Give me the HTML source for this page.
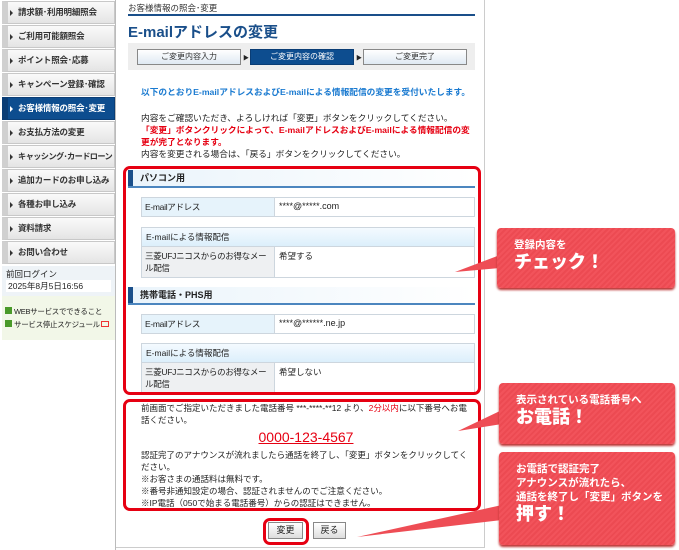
<!DOCTYPE html>
<html><head><meta charset="utf-8"><style>
*{margin:0;padding:0;box-sizing:border-box}
body{width:679px;height:550px;overflow:hidden;background:#fff;font-family:"Liberation Sans","Noto Sans CJK JP",sans-serif;font-size:9px;color:#222;position:relative}
.a{position:absolute}
.nav{left:0;top:0;width:116px;border-right:1px solid #bbb;height:550px}
.it{position:absolute;left:2px;width:113px;height:23px;background:linear-gradient(#fafafa,#e4e4e4);border:1px solid #c8c8c8;border-left:6px solid #d0d0d0;font-size:8.5px;font-weight:bold;color:#333;line-height:21px;padding-left:10px;white-space:nowrap;letter-spacing:-0.2px;overflow:hidden}
.it:before{content:"";position:absolute;left:2px;top:8px;border-left:3px solid #333;border-top:3px solid transparent;border-bottom:3px solid transparent}
.it.s{background:#0d4d8f;border-color:#0a3d75;color:#fff}
.it.s:before{border-left-color:#fff}
.tb{position:absolute;left:141px;width:334px;border:1px solid #cdd6de;font-size:8.5px}
.tb .r{display:flex;border-top:1px solid #cdd6de}
.tb .r:first-child{border-top:0}
.tb .l{width:133px;background:#e6f3fb;padding:3px 3px;border-right:1px solid #cdd6de;letter-spacing:-0.3px}
.tb .v{flex:1;background:#fff;padding:3px 4px}
.tb .h{background:linear-gradient(#f4faff,#dceffb);padding:3px 4px;width:100%}
.sh{position:absolute;left:128px;width:347px;height:18px;background:linear-gradient(90deg,#eaf4fb,#fff);border-bottom:2px solid #4c86bf;font-weight:bold;font-size:9px;line-height:17px;padding-left:12px}
.sh:before{content:"";position:absolute;left:0;top:0;width:5px;height:16px;background:#1a4f8a}
.rb{position:absolute;border:3px solid #e60012;border-radius:7px}
.co{position:absolute;background:repeating-linear-gradient(135deg,#f2535b 0 2px,#ec4a52 2px 4px);border-radius:4px;color:#fff;font-weight:bold;box-shadow:0 2px 2px #b33;font-size:10.5px;line-height:14px;padding:10px 14px}
.co b{font-size:18px;display:block;line-height:21px}
.stp{position:absolute;top:49px;height:16px;width:104px;border:1px solid #888;background:linear-gradient(#fff,#dfe9f3);font-size:8px;text-align:center;line-height:14px;color:#333}
</style></head><body>
<div class="a nav">
<div class="it" style="top:1px">請求額･利用明細照会</div>
<div class="it" style="top:25px">ご利用可能額照会</div>
<div class="it" style="top:49px">ポイント照会･応募</div>
<div class="it" style="top:73px">キャンペーン登録･確認</div>
<div class="it s" style="top:97px">お客様情報の照会･変更</div>
<div class="it" style="top:121px">お支払方法の変更</div>
<div class="it" style="top:145px;letter-spacing:-0.6px;font-size:8.2px">キャッシング･カードローン</div>
<div class="it" style="top:169px">追加カードのお申し込み</div>
<div class="it" style="top:193px">各種お申し込み</div>
<div class="it" style="top:217px">資料請求</div>
<div class="it" style="top:241px">お問い合わせ</div>
<div class="a" style="left:2px;top:266px;width:113px;height:30px;background:#eef3f7;font-size:8.5px;padding:2px 4px;line-height:12px">前回ログイン<div style="background:#fff;padding-left:2px">2025年8月5日16:56</div></div>
<div class="a" style="left:2px;top:296px;width:113px;height:44px;background:#f2f7e8;font-size:7.5px;padding:9px 3px;line-height:13px;white-space:nowrap;letter-spacing:-0.3px"><div><span style="display:inline-block;width:7px;height:7px;background:#4a9a2a;margin-right:2px"></span>WEBサービスでできること</div><div><span style="display:inline-block;width:7px;height:7px;background:#4a9a2a;margin-right:2px"></span>サービス停止スケジュール<span style="display:inline-block;width:8px;height:6px;border:1.5px solid #e33;margin-left:1px"></span></div></div>
</div>
<div class="a" style="left:484px;top:0;width:1px;height:548px;background:#ccc"></div>
<div class="a" style="left:116px;top:547px;width:369px;height:1px;background:#ccc"></div>
<div class="a" style="left:128px;top:2px;font-size:8.5px;color:#333">お客様情報の照会･変更</div>
<div class="a" style="left:128px;top:14px;width:347px;height:2px;background:#1a4f8a"></div>
<div class="a" style="left:128px;top:21px;font-size:15px;font-weight:bold;color:#1a4f8a">E-mailアドレスの変更</div>
<div class="a" style="left:128px;top:43px;width:347px;height:27px;background:#eee"></div>
<div class="stp" style="left:137px">ご変更内容入力</div>
<div class="a" style="left:243px;top:53px;font-size:6px">▶</div>
<div class="stp" style="left:250px;background:#0d4d8f;color:#fff;border-color:#0a3d75">ご変更内容の確認</div>
<div class="a" style="left:356px;top:53px;font-size:6px">▶</div>
<div class="stp" style="left:363px">ご変更完了</div>
<div class="a" style="left:141px;top:85px;color:#1a7ad0;font-weight:bold;font-size:8.7px">以下のとおりE-mailアドレスおよびE-mailによる情報配信の変更を受付いたします。</div>
<div class="a" style="left:141px;top:112px;width:335px;font-size:8.7px;line-height:12px">内容をご確認いただき、よろしければ「変更」ボタンをクリックしてください。<br><span style="color:#e60012;font-weight:bold">「変更」ボタンクリックによって、E-mailアドレスおよびE-mailによる情報配信の変更が完了となります。</span><br>内容を変更される場合は、「戻る」ボタンをクリックしてください。</div>
<div class="sh" style="top:170px">パソコン用</div>
<div class="tb" style="top:197px"><div class="r"><div class="l">E-mailアドレス</div><div class="v" style="font-size:9px">****@*****.com</div></div></div>
<div class="tb" style="top:227px"><div class="r"><div class="h">E-mailによる情報配信</div></div><div class="r" style="height:31px"><div class="l" style="background:#eef0f2">三菱UFJニコスからのお得なメール配信</div><div class="v">希望する</div></div></div>
<div class="sh" style="top:287px">携帯電話・PHS用</div>
<div class="tb" style="top:314px"><div class="r"><div class="l">E-mailアドレス</div><div class="v" style="font-size:9px">****@******.ne.jp</div></div></div>
<div class="tb" style="top:343px"><div class="r"><div class="h">E-mailによる情報配信</div></div><div class="r" style="height:31px"><div class="l" style="background:#eef0f2">三菱UFJニコスからのお得なメール配信</div><div class="v">希望しない</div></div></div>
<div class="rb" style="left:123px;top:166px;width:358px;height:229px"></div>
<div class="a" style="left:141px;top:402px;width:330px;font-size:8.5px;line-height:12px">前画面でご指定いただきました電話番号 ***-****-**12 より、<span style="color:#e60012">2分以内</span>に以下番号へお電話ください。<div style="text-align:center;color:#e60012;font-size:14px;text-decoration:underline;line-height:20px;margin:1px 0 2px">0000-123-4567</div>認証完了のアナウンスが流れましたら通話を終了し、「変更」ボタンをクリックしてください。<br>※お客さまの通話料は無料です。<br>※番号非通知設定の場合、認証されませんのでご注意ください。<br>※IP電話（050で始まる電話番号）からの認証はできません。</div>
<div class="rb" style="left:123px;top:399px;width:358px;height:112px"></div>
<div class="a" style="left:268px;top:522px;width:35px;height:17px;border:1px solid #888;background:linear-gradient(#fff,#ddd);text-align:center;line-height:15px">変更</div>
<div class="a" style="left:313px;top:522px;width:33px;height:17px;border:1px solid #888;background:linear-gradient(#fff,#ddd);text-align:center;line-height:15px">戻る</div>
<div class="rb" style="left:263px;top:518px;width:46px;height:27px"></div>
<svg class="a" style="left:0;top:0" width="679" height="550"><polygon points="455,272 500,255 500,268" fill="#ee4d55"/><polygon points="458,431 502,410 502,424" fill="#ee4d55"/><polygon points="357,537 502,505 502,520" fill="#ee4d55"/></svg>
<div class="co" style="left:497px;top:228px;width:178px;height:60px;padding-left:17px">登録内容を<b>チェック！</b></div>
<div class="co" style="left:499px;top:383px;width:176px;height:61px;padding-left:17px">表示されている電話番号へ<b>お電話！</b></div>
<div class="co" style="left:499px;top:452px;width:176px;height:93px;padding:10px 6px 0 17px;white-space:nowrap">お電話で認証完了<br>アナウンスが流れたら、<br>通話を終了し「変更」ボタンを<b>押す！</b></div>
</body></html>
